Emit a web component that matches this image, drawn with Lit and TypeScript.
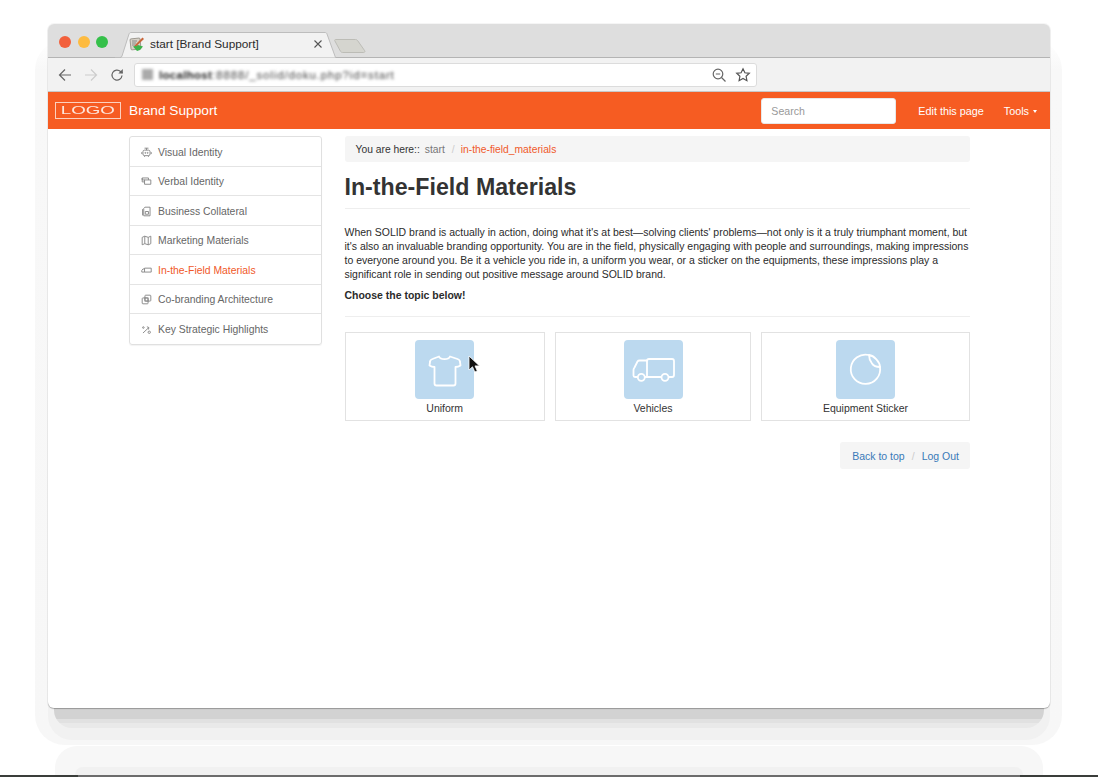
import { LitElement, html, css, svg } from "lit";
import { customElement } from "lit/decorators.js";

const ICON_PATHS: Record<string, unknown> = {
  visual: svg`<rect x="2.500" y="4" width="9" height="7" rx="2"/><path d="M7 1.500V4M4.500 1.500h5M1 6.500v2.500M13 6.500v2.500M4.500 11v1.500M9.500 11v1.500"/><circle cx="5.500" cy="7.500" r=".6"/><circle cx="8.500" cy="7.500" r=".6"/>`,
  verbal: svg`<path d="M5 5H1.500V2.500h8V5M4.500 5h8v5.500h-8zM1.500 2.500V7.500H4.500"/>`,
  business: svg`<path d="M5 1.500h6.500v11h-8V3zM2 4v8M5.500 7h4v3.500h-4z"/>`,
  marketing: svg`<path d="M1.500 3 4.800 1.500 9.200 3l3.300-1.500V11L9.200 12.500 4.800 11 1.500 12.500zM4.800 1.500V11M9.200 3v9.500"/>`,
  field: svg`<path d="M4.500 4H13v5H4.500zM4.500 5H2.500L1 7v2h3.500"/>`,
  cobrand: svg`<rect x="5" y="1.500" width="7.500" height="7.500" rx="1"/><rect x="1.500" y="5" width="7.500" height="7.500" rx="1"/><rect x="5" y="5" width="4" height="4"/>`,
  key: svg`<path d="M2.500 11.500 10 4.500M7.500 3.500 10 4.500 9.500 7"/><circle cx="3" cy="4.500" r="1"/><circle cx="10.500" cy="10.500" r="1.500"/>`,
};

const NAV = [
  ["visual", "Visual Identity"],
  ["verbal", "Verbal Identity"],
  ["business", "Business Collateral"],
  ["marketing", "Marketing Materials"],
  ["field", "In-the-Field Materials"],
  ["cobrand", "Co-branding Architecture"],
  ["key", "Key Strategic Highlights"],
];

const TILES = [
  {
    label: "Uniform",
    cls: "t1",
    icon: svg`<path d="M24 16.500c1.500 3.500 9.500 3.500 11 0l7.500 2.500c1.500.5 2.500 1.500 2.500 3l.5 3.500c-1.500 1-3.500 1.500-5 1.500V43.500a2 2 0 0 1-2 2H21.500a2 2 0 0 1-2-2V27c-1.500 0-3.500-.5-5-1.500l.5-3.500c0-1.500 1-2.500 2.500-3z"/>`,
  },
  {
    label: "Vehicles",
    cls: "t2",
    icon: svg`<path d="M21 37h2M23 37V21a2 2 0 0 1 2-2H48a2 2 0 0 1 2 2V35a2 2 0 0 1-2 2H45M37 37H23"/><path d="M13.500 37H11a1.500 1.500 0 0 1-1.500-1.500V30c0-1 .3-1.600 1-2.500l3-6c.5-.8 1.100-1 2-1H23"/><circle cx="17.300" cy="37.300" r="3.500"/><circle cx="41" cy="37.300" r="3.500"/>`,
  },
  {
    label: "Equipment Sticker",
    cls: "t3",
    icon: svg`<path d="M44 27A14.700 14.700 0 1 1 33 15"/><path d="M33 15c5 .5 11 7 11 12-3.500 0-6.500-1-8-3.500-2-2.500-3-5.500-3-8.500z"/>`,
  },
];

@customElement("app-root")
export class AppRoot extends LitElement {
  static styles = css`
    :host {
      display: block;
      position: relative;
      height: 777px;
      overflow: hidden;
      background: #fff;
      font-family: "Liberation Sans", Arial, sans-serif;
      box-sizing: border-box;
      padding: 24px 48px 0;
      color: #333;
    }
    .halo {
      position: absolute;
      left: 35px;
      top: 40px;
      width: 1027px;
      height: 705px;
      border-radius: 30px;
      background: linear-gradient(#ffffff 0, #f8f8f8 30px, #f7f7f7 100%);
    }
    .reflect {
      position: absolute;
      left: 55px;
      top: 746px;
      width: 988px;
      height: 31px;
      border-radius: 22px 22px 0 0;
      background: #f7f7f7;
    }
    .reflect::after {
      content: "";
      position: absolute;
      left: 20px;
      right: 20px;
      bottom: 0;
      height: 10px;
      border-radius: 8px 8px 0 0;
      background: #f1f1f1;
    }
    .base {
      position: absolute;
      left: 0;
      right: 0;
      bottom: 0;
      height: 2px;
      background: linear-gradient(
        90deg,
        #3a3d3a 0,
        #3a3d3a 78px,
        #6c6c6c 78px,
        #6c6c6c 1020px,
        #3a3d3a 1020px
      );
    }
    .shade {
      position: absolute;
      left: 48px;
      top: 700px;
      width: 1002px;
      height: 40px;
      border-radius: 0 0 24px 24px;
      background: #f1f1f1;
    }
    .shade::before {
      content: "";
      position: absolute;
      left: 6px;
      right: 6px;
      top: 0;
      height: 28px;
      border-radius: 0 0 18px 18px;
      background: linear-gradient(#d2d2d2 0, #d2d2d2 19px, #e1e1e1 19px, #e1e1e1 23px, #e9e9e9 23px);
    }
    .win {
      position: relative;
      height: 684px;
      background: #fff;
      border-radius: 6px;
      overflow: hidden;
      box-shadow: 0 0 0 1px rgba(0, 0, 0, 0.04), 0 1px 1px rgba(0, 0, 0, 0.25);
      display: flex;
      flex-direction: column;
    }
    .titlebar {
      height: 34px;
      box-sizing: border-box;
      background: #dedede;
      border-bottom: 1px solid #b4b4b4;
      display: flex;
      align-items: flex-end;
      position: relative;
      flex: none;
    }
    .lights {
      display: flex;
      gap: 6.500px;
      margin: 0 0 9.500px 11px;
      align-self: flex-end;
    }
    .lights i {
      display: block;
      width: 12px;
      height: 12px;
      border-radius: 50%;
    }
    .tabsvg {
      position: absolute;
      left: 67px;
      top: 8px;
    }
    .tab {
      position: absolute;
      left: 81px;
      top: 7px;
      height: 25px;
      width: 198px;
      display: flex;
      align-items: center;
      font-size: 11.800px;
      color: #2b2b2b;
    }
    .fav {
      width: 16px;
      height: 16px;
      margin-right: 5px;
      flex: none;
    }
    .close {
      position: absolute;
      left: 183px;
      top: 7px;
    }
    .newtab {
      position: absolute;
      left: 286px;
      top: 14px;
    }
    .toolbar {
      height: 34px;
      background: #f2f2f2;
      border-bottom: 1px solid #c8c8c8;
      box-sizing: border-box;
      display: flex;
      align-items: center;
      flex: none;
      padding-left: 10px;
    }
    .btns {
      display: flex;
      gap: 12px;
      align-items: center;
      width: 76px;
      flex: none;
    }
    .btns svg {
      display: block;
    }
    .url {
      width: 623px;
      height: 24px;
      box-sizing: border-box;
      background: #fff;
      border: 1px solid #dcdcdc;
      border-radius: 3px;
      display: flex;
      align-items: center;
      padding: 0 5px 0 7px;
      gap: 6px;
      overflow: hidden;
    }
    .blur {
      filter: blur(1.400px);
      font-size: 11.500px;
      color: #444;
      flex: 1;
      white-space: nowrap;
      letter-spacing: 0.850px;
    }
    .blur b {
      color: #222;
      letter-spacing: 0.300px;
    }
    .blurbox {
      width: 11px;
      height: 11px;
      background: #aaa;
      filter: blur(1.500px);
      flex: none;
    }
    .navbar {
      height: 37px;
      background: #f65c22;
      display: flex;
      align-items: center;
      flex: none;
      color: #fff;
      padding-left: 7px;
    }
    .logo {
      width: 66px;
      height: 17px;
      box-sizing: border-box;
      border: 1px solid #fcd0be;
      font-size: 11px;
      line-height: 15px;
      text-align: center;
      color: #fde6dc;
      margin-right: 8px;
      overflow: hidden;
    }
    .logo span {
      display: inline-block;
      transform: scaleX(1.700);
    }
    .brand {
      font-size: 13.700px;
      flex: 1;
    }
    .search {
      width: 135px;
      height: 26px;
      box-sizing: border-box;
      background: #fff;
      border: 1px solid #e8e8e8;
      border-radius: 3px;
      color: #999;
      font-size: 10.600px;
      display: flex;
      align-items: center;
      padding-left: 9px;
      margin-right: 22px;
    }
    .navlink {
      font-size: 10.800px;
      margin-right: 20px;
    }
    .tools {
      font-size: 10.800px;
      margin-right: 13px;
      display: flex;
      align-items: center;
      gap: 4px;
    }
    .caret {
      width: 0;
      height: 0;
      border-left: 2.500px solid transparent;
      border-right: 2.500px solid transparent;
      border-top: 3px solid #fff;
      margin-top: 2px;
    }
    .body {
      display: flex;
      align-items: flex-start;
      padding: 7px 0 0 81px;
      gap: 22.500px;
    }
    .side {
      width: 193px;
      box-sizing: border-box;
      border: 1px solid #e0e0e0;
      border-radius: 3px;
      box-shadow: 0 1px 1px rgba(0, 0, 0, 0.05);
      flex: none;
    }
    .side a {
      display: flex;
      align-items: center;
      height: 29.500px;
      box-sizing: border-box;
      padding: 2px 0 0 11px;
      font-size: 10.400px;
      color: #666;
      border-bottom: 1px solid #e4e4e4;
    }
    .side a:last-child {
      border-bottom: 0;
    }
    .side a.on {
      color: #f0592a;
    }
    .side svg {
      width: 11px;
      height: 11px;
      margin-right: 6px;
      flex: none;
      color: #888;
    }
    .side svg * {
      fill: none;
      stroke: currentColor;
      stroke-width: 1.200;
    }
    .main {
      width: 625.500px;
      flex: none;
    }
    .crumb {
      height: 26px;
      background: #f5f5f5;
      border-radius: 3px;
      display: flex;
      align-items: center;
      padding-left: 11px;
      font-size: 10.300px;
      color: #333;
    }
    .crumb .s {
      color: #777;
      margin-left: 5px;
    }
    .crumb .d {
      color: #ccc;
      margin: 0 6px 0 7px;
    }
    .crumb .c {
      color: #f0592a;
    }
    h1 {
      margin: 12px 0 0;
      font-size: 23.200px;
      line-height: 27px;
      font-weight: 700;
      color: #333;
      padding-bottom: 7px;
      border-bottom: 1px solid #eee;
    }
    p {
      margin: 17px 0 0;
      font-size: 10.470px;
      line-height: 14px;
      color: #2b2b2b;
    }
    p.b {
      margin-top: 7px;
      font-weight: 700;
    }
    hr {
      border: 0;
      border-top: 1px solid #eee;
      margin: 13px 0 15px;
    }
    .tiles {
      display: flex;
      gap: 10px;
    }
    .tile {
      height: 89px;
      box-sizing: border-box;
      border: 1px solid #e2e2e2;
      display: flex;
      flex-direction: column;
      align-items: center;
      padding-top: 7px;
      font-size: 10.500px;
      color: #333;
    }
    .t1 {
      width: 200.500px;
    }
    .t2 {
      width: 196px;
    }
    .t3 {
      width: 209px;
    }
    .square {
      width: 59px;
      height: 59px;
      border-radius: 4px;
      background: #bcd9ef;
      margin-bottom: 3px;
      flex: none;
    }
    .square svg {
      display: block;
      width: 59px;
      height: 59px;
      fill: none;
      stroke: #fff;
      stroke-width: 1.800;
      stroke-linejoin: round;
      stroke-linecap: round;
    }
    .foot {
      display: flex;
      justify-content: flex-end;
      margin-top: 21px;
    }
    .footbox {
      height: 27px;
      background: #f5f5f5;
      border-radius: 3px;
      display: flex;
      align-items: center;
      padding: 0 11px 0 12px;
      font-size: 10.500px;
      color: #3a7ab8;
    }
    .footbox .d {
      color: #ccc;
      margin: 0 7px;
    }
    .cursor {
      position: absolute;
      left: 468px;
      top: 355px;
    }
  `;

  render() {
    return html`
      <div class="halo"></div>
      <div class="reflect"></div>
      <div class="shade"></div>
      <div class="base"></div>
      <div class="win">
        <div class="titlebar">
          <div class="lights">
            <i style="background:#f2603c"></i>
            <i style="background:#fdbb40"></i>
            <i style="background:#35c04a"></i>
          </div>
          <svg class="tabsvg" width="224" height="26" viewBox="0 0 224 26">
            <path d="M0 25.500h5c1 0 1.500-.5 2-1.500L14 2c.4-1 1-1.500 2-1.500h194c1 0 1.600.5 2 1.500l8.500 23.500" fill="#f2f2f2" stroke="#bdbdbd" />
          </svg>
          <div class="tab">
            <svg class="fav" viewBox="0 0 16 16">
              <rect x="1.500" y="2.500" width="10" height="11" rx="1" fill="#d8d2c8" stroke="#8f8a80" stroke-width=".8" transform="rotate(-6 6 8)" />
              <path d="M3 5h5M3 7h4M3 9h3" stroke="#777" stroke-width=".8" />
              <path d="M4 10.500 9 9l5 1.500-3 3.500-3 1z" fill="#3cb34a" />
              <path d="M5.500 9.500 13.500 1.500l1.500 1.500L7 10.500z" fill="#c9663a" />
            </svg>
            start [Brand Support]
            <svg class="close" width="12" height="12" viewBox="0 0 12 12">
              <path d="M2.500 2.500l7 7M9.500 2.500l-7 7" stroke="#555" stroke-width="1.100" />
            </svg>
          </div>
          <svg class="newtab" width="34" height="16" viewBox="0 0 34 16">
            <path d="M1.500 1.500h20c1 0 1.700.4 2.200 1.200l7 10c.5.8 0 1.800-1 1.800h-21c-1 0-1.700-.4-2.200-1.200L.8 2.800c-.4-.6 0-1.300.7-1.300z" fill="#d5d5cf" stroke="#bcbcb6" />
          </svg>
        </div>
        <div class="toolbar">
          <div class="btns">
            <svg width="14" height="14" viewBox="0 0 14 14" fill="none" stroke="#666" stroke-width="1.200">
              <path d="M13 7H2M7 1.500 1.500 7 7 12.500" />
            </svg>
            <svg width="14" height="14" viewBox="0 0 14 14" fill="none" stroke="#ccc" stroke-width="1.200">
              <path d="M1 7h11M7 1.500 12.500 7 7 12.500" />
            </svg>
            <svg width="14" height="14" viewBox="0 0 14 14" fill="none" stroke="#666" stroke-width="1.200">
              <path d="M12 7.500A5 5 0 1 1 10.500 3.500L12.500 5" />
              <path d="M12.800 1v4.500H8.300" fill="#666" stroke="none" />
            </svg>
          </div>
          <div class="url">
            <span class="blurbox"></span>
            <span class="blur"><b>localhost</b>:8888/_solid/doku.php?id=start</span>
            <svg width="16" height="16" viewBox="0 0 16 16" fill="none" stroke="#666" stroke-width="1.200">
              <circle cx="7" cy="7" r="4.800" />
              <path d="M10.500 10.500 14.500 14.500M4.800 7h4.400" />
            </svg>
            <svg width="16" height="16" viewBox="0 0 16 16" fill="none" stroke="#555" stroke-width="1.200" style="margin-left:2px">
              <path d="M8 1.800l1.900 4 4.400.5-3.200 3 .8 4.400L8 11.500l-3.900 2.200.8-4.400-3.200-3 4.400-.5z" />
            </svg>
          </div>
        </div>
        <div class="navbar">
          <div class="logo"><span>LOGO</span></div>
          <div class="brand">Brand Support</div>
          <div class="search">Search</div>
          <div class="navlink">Edit this page</div>
          <div class="tools">Tools <span class="caret"></span></div>
        </div>
        <div class="body">
          <div class="side">
            ${NAV.map(
              ([k, t]) => html`<a class=${k === "field" ? "on" : ""}>
                <svg viewBox="0 0 14 14">${ICON_PATHS[k]}</svg>${t}
              </a>`
            )}
          </div>
          <div class="main">
            <div class="crumb">
              You are here::<span class="s">start</span><span class="d">/</span><span class="c">in-the-field_materials</span>
            </div>
            <h1>In-the-Field Materials</h1>
            <p>
              When SOLID brand is actually in action, doing what it's at best—solving clients' problems—not only is it a truly triumphant moment, but it's also an invaluable branding opportunity. You are in the field, physically engaging with people and surroundings, making impressions to everyone around you. Be it a vehicle you ride in, a uniform you wear, or a sticker on the equipments, these impressions play a significant role in sending out positive message around SOLID brand.
            </p>
            <p class="b">Choose the topic below!</p>
            <hr />
            <div class="tiles">
              ${TILES.map(
                (t) => html`<div class="tile ${t.cls}">
                  <div class="square"><svg viewBox="0 0 59 59">${t.icon}</svg></div>
                  ${t.label}
                </div>`
              )}
            </div>
            <div class="foot">
              <div class="footbox">Back to top<span class="d">/</span>Log Out</div>
            </div>
          </div>
        </div>
      </div>
      <svg class="cursor" width="14" height="20" viewBox="0 0 14 20">
        <path d="M1 1v14l3.500-3.200 2.300 5.200 2.500-1.100-2.300-5H11.500z" fill="#111" stroke="#fff" stroke-width=".8" />
      </svg>
    `;
  }
}
